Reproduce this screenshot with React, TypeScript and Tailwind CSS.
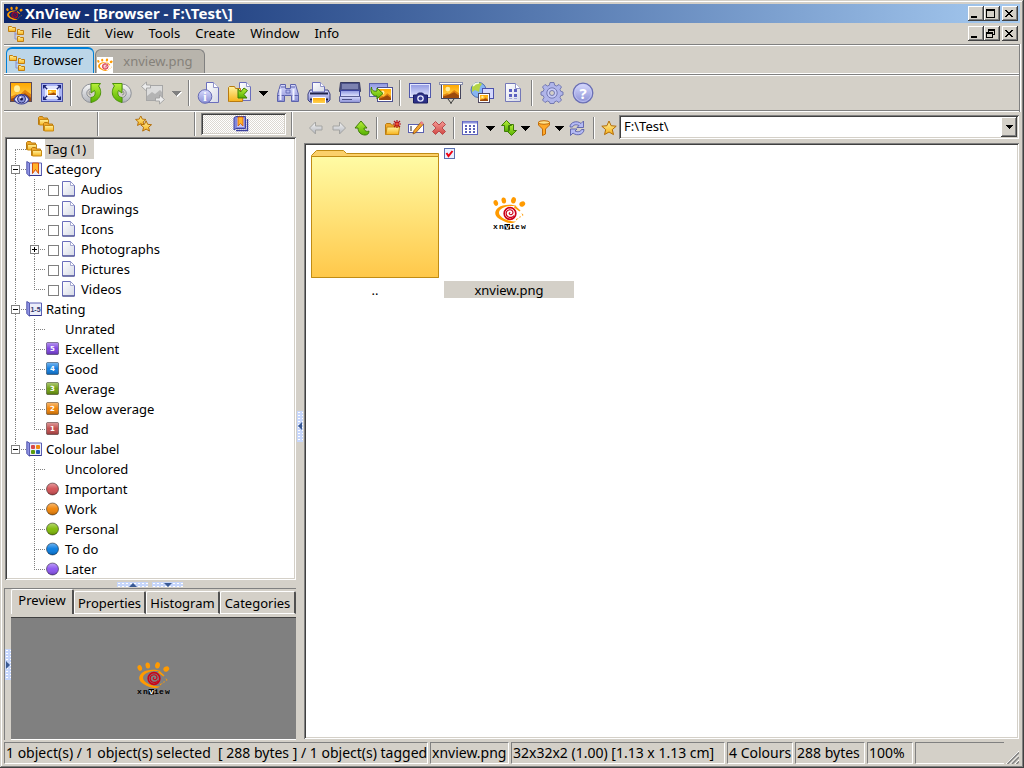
import { useState, type ReactNode } from 'react';
import clsx from 'clsx';

const SUNKEN = 'shadow-[inset_1px_1px_#808080,inset_-1px_-1px_#ffffff,inset_2px_2px_#404040,inset_-2px_-2px_#d4d0c8]';
const RAISED = 'bg-[#d4d0c8] shadow-[inset_-1px_-1px_#404040,inset_1px_1px_#ffffff,inset_-2px_-2px_#808080]';

function Gradients() {
    return (
        <svg className="absolute h-0 w-0" aria-hidden="true">
            <defs>
                <linearGradient id="gold" x1="0" y1="0" x2="0" y2="1">
                    <stop offset="0" stopColor="#fff3a0" />
                    <stop offset="1" stopColor="#f7b21c" />
                </linearGradient>
                <linearGradient id="folderBig" x1="0" y1="0" x2="0" y2="1">
                    <stop offset="0" stopColor="#fffba4" />
                    <stop offset="1" stopColor="#ffc84a" />
                </linearGradient>
                <linearGradient id="sky" x1="0" y1="0" x2="0" y2="1">
                    <stop offset="0" stopColor="#ffa800" />
                    <stop offset="1" stopColor="#ffd65c" />
                </linearGradient>
                <linearGradient id="lilac" x1="0" y1="0" x2="0" y2="1">
                    <stop offset="0" stopColor="#8d95e0" />
                    <stop offset="1" stopColor="#e3e7ff" />
                </linearGradient>
                <linearGradient id="orb" x1="0" y1="0" x2="0" y2="1">
                    <stop offset="0" stopColor="#d9dcff" />
                    <stop offset="1" stopColor="#8a8fd4" />
                </linearGradient>
                <linearGradient id="green" x1="0" y1="0" x2="0" y2="1">
                    <stop offset="0" stopColor="#b8f03a" />
                    <stop offset="1" stopColor="#55b000" />
                </linearGradient>
                <linearGradient id="paper" x1="0" y1="0" x2="1" y2="1">
                    <stop offset="0" stopColor="#ffffff" />
                    <stop offset="1" stopColor="#d5d9e6" />
                </linearGradient>
                <linearGradient id="silver" x1="0" y1="0" x2="0" y2="1">
                    <stop offset="0" stopColor="#f8f8f8" />
                    <stop offset="1" stopColor="#b0b3ba" />
                </linearGradient>
                <linearGradient id="red" x1="0" y1="0" x2="0" y2="1">
                    <stop offset="0" stopColor="#f59a94" />
                    <stop offset="1" stopColor="#d04844" />
                </linearGradient>
                <linearGradient id="shine" x1="0" y1="0" x2="0" y2="1">
                    <stop offset="0" stopColor="#ffffff" stopOpacity="0.45" />
                    <stop offset="0.5" stopColor="#ffffff" stopOpacity="0.05" />
                    <stop offset="1" stopColor="#000000" stopOpacity="0.25" />
                </linearGradient>
            </defs>
        </svg>
    );
}

function Icon({ size = 24, box = 24, children }: { size?: number; box?: number; children: ReactNode }) {
    return (
        <svg width={size} height={size} viewBox={`0 0 ${box} ${box}`} className="shrink-0" aria-hidden="true">
            {children}
        </svg>
    );
}

/* ---- shared drawings ---- */

const Landscape = ({ x, y, w, h }: { x: number; y: number; w: number; h: number }) => (
    <svg x={x} y={y} width={w} height={h} viewBox="0 0 20 16" preserveAspectRatio="none">
        <rect width="20" height="16" fill="url(#sky)" />
        <circle cx="6" cy="5" r="3" fill="#ffefa0" />
        <path d="M0 12l5-2 3 1 6-5 6 4v6H0z" fill="#e08410" />
        <path d="M0 14l7-2 7-3 6 4v3H0z" fill="#9c4a0c" />
    </svg>
);

const wordmark = [
    { char: 'x', x: 0 },
    { char: 'n', x: 6 },
    { char: 'v', x: 12 },
    { char: 'i', x: 17 },
    { char: 'e', x: 22 },
    { char: 'w', x: 28 }
];

function XnLogo({ size = 33, label = true }: { size?: number; label?: boolean }) {
    return (
        <svg width={size} height={size} viewBox={label ? '0 0 33 33' : '0 0 33 27'} className="shrink-0" role="img" aria-label="XnView">
            <g fill="#ff9a00">
                <ellipse cx="2.800" cy="6" rx="2.200" ry="2.900" transform="rotate(-20 2.800 6)" />
                <ellipse cx="10.800" cy="3.500" rx="2.300" ry="3" transform="rotate(-8 10.800 3.500)" />
                <ellipse cx="20.500" cy="3.300" rx="2.400" ry="3.200" transform="rotate(14 20.500 3.300)" />
                <ellipse cx="29.300" cy="7" rx="3" ry="2.500" transform="rotate(-30 29.300 7)" />
                <path d="M25 9.500C18 6.500 9 8 5.500 10.500c-5 4-4 8.500 1 11.500 4 2.500 8 4 11 4 2 0 4-.5 5.500-1.500-8 0-16.500-4-17-8.500 0-4 5-6.500 11-7 3-.3 6 0 8 .5z" />
                <path d="M22 8.500l5.500 5-1 1-5.500-4zM28.500 16l2 2-1 1zM26 20l2-1-1 2zM23 22l3-1-3 2.500z" />
            </g>
            <circle cx="17" cy="16.500" r="5.800" fill="none" stroke="#cc0018" strokeWidth="1.700" />
            <path d="M21 18.500c-1 2-4 2.500-6 1.200-2.500-1.500-2.500-5 0-6.400 2-1.200 5-.3 5 2.200 0 2-2.500 3-3.500 1.500-.5-.8 0-1.500.8-1.500" fill="none" stroke="#cc0018" strokeWidth="1.200" />
            {label && (
                <g fontSize="8" fontWeight="bold" fontFamily="'Liberation Mono', monospace">
                    <rect x="11.500" y="27" width="5.500" height="5.500" />
                    {wordmark.map(({ char, x }) => (
                        <text key={char} x={x} y="32" fill={char === 'v' ? '#ffffff' : '#000000'}>{char}</text>
                    ))}
                </g>
            )}
        </svg>
    );
}

const FolderShape = ({ x, y }: { x: number; y: number }) => (
    <g transform={`translate(${x} ${y})`}>
        <path d="M.5 8.500v-7l1-1h3l1 1.500h4v6.500z" fill="#f2a92a" stroke="#b87a10" />
        <path d="M1.500 3.500h9v5.500h-9z" fill="url(#gold)" stroke="#c98a14" />
    </g>
);

const FoldersIcon = () => (
    <Icon size={16} box={16}>
        <FolderShape x={0} y={0} />
        <FolderShape x={5} y={6} />
    </Icon>
);

const TreeFoldersIcon = ({ size = 16 }: { size?: number }) => (
    <Icon size={size} box={16}>
        <path d="M4 5h3v8h3M7 8h3" fill="none" stroke="#8a90d0" />
        <path d="M.5.5h3l1 1h3v4h-7z" fill="url(#gold)" stroke="#c07d10" />
        <path d="M9.500 3.500h2l1 1h3v4h-6z" fill="url(#gold)" stroke="#c07d10" />
        <path d="M9.500 10.500h2l1 1h3v4h-6z" fill="url(#gold)" stroke="#c07d10" />
    </Icon>
);

const STAR = 'M8 1l2.100 4.700 5.100.5-3.900 3.400 1.200 5L8 12l-4.500 2.600 1.200-5L.800 6.200l5.100-.5z';

const StarsIcon = () => (
    <Icon size={17} box={17}>
        <path d={STAR} transform="translate(0 -1) scale(.72)" fill="url(#gold)" stroke="#b26c08" strokeWidth="1.300" />
        <path d={STAR} transform="translate(5 4) scale(.76)" fill="url(#gold)" stroke="#b26c08" strokeWidth="1.300" />
    </Icon>
);

const TabBookIcon = () => (
    <Icon size={16} box={16}>
        <path d="M1 2l2-1.500h9.500v12H3L1 14z" fill="#8288dc" stroke="#3c41a0" />
        <path d="M3 14.500h11.500V3" fill="none" stroke="#3c41a0" strokeWidth="1.400" />
        <path d="M4 2h7v9H4z" fill="#c4c8f4" />
        <path d="M5 1h5v9L7.500 7.500 5 10z" fill="#ffb42a" stroke="#d0560a" strokeWidth=".8" />
    </Icon>
);

const Book = ({ children }: { children: ReactNode }) => (
    <Icon size={16} box={16}>
        <path d="M3.500 2L.800.500v12l2.700 2.800z" fill="#8f94e4" stroke="#4448a4" strokeWidth=".9" />
        <path d="M3.500 2h12v12.500h-12z" fill="#eceefa" stroke="#5a5eb4" />
        <path d="M3.500 14.500h12" stroke="#32368c" />
        {children}
    </Icon>
);

const PageIcon = () => (
    <svg width="14" height="16" viewBox="0 0 14 16" className="shrink-0" aria-hidden="true">
        <path d="M.5.5h8l4 4v10.500H.5z" fill="url(#paper)" stroke="#6a6ebc" />
        <path d="M8.500.5v4h4z" fill="#fff" stroke="#9094c8" strokeWidth=".8" />
        <path d="M.5 15h12" stroke="#3c4080" />
    </svg>
);

function RatingIcon({ value, color }: { value: string; color: string }) {
    return (
        <svg width="14" height="14" viewBox="0 0 14 14" className="shrink-0" aria-hidden="true">
            <rect x=".5" y=".5" width="12" height="12" rx="1" fill={color} />
            <rect x=".5" y=".5" width="12" height="12" rx="1" fill="url(#shine)" stroke="#000" strokeOpacity=".35" />
            <text x="6.500" y="9" fontSize="7" fontWeight="bold" textAnchor="middle" fill="#fff" fontFamily="'DejaVu Sans', sans-serif">{value}</text>
        </svg>
    );
}

function DotIcon({ color }: { color: string }) {
    return (
        <svg width="14" height="14" viewBox="0 0 14 14" className="shrink-0" aria-hidden="true">
            <circle cx="6.500" cy="7" r="6" fill={color} />
            <circle cx="6.500" cy="7" r="6" fill="url(#shine)" stroke="#000" strokeOpacity=".45" />
        </svg>
    );
}

/* ---- main toolbar icons ---- */

const BrowseIcon = () => (
    <Icon>
        <rect x="1.500" y="1.500" width="21" height="19" fill="#ffb010" stroke="#5c4a58" />
        <Landscape x={2} y={2} w={20} h={18} />
        <path d="M5 18.500c2-4 5-5 7.500-5s5.500 1 7.500 5c-2 3.500-5 4.500-7.500 4.500S7 22 5 18.500z" fill="#d8dcfa" stroke="#3a3f98" strokeWidth="1.200" />
        <circle cx="12.500" cy="18" r="4" fill="#8c94dc" stroke="#30347c" />
        <circle cx="12.500" cy="18" r="1.500" fill="#101448" />
        <circle cx="11.500" cy="16.500" r="1" fill="#fff" />
    </Icon>
);

const FullscreenIcon = () => (
    <Icon>
        <rect x="1.500" y="2.500" width="21" height="18" fill="#aab4f4" stroke="#4a52a8" />
        <rect x="5" y="5" width="14" height="13" fill="#e4e8ff" />
        <path d="M3 4h4L3 8zM21 4h-4l4 4zM3 19h4l-4-4zM21 19h-4l4-4z" fill="#1c2474" />
        <path d="M4 5l4 4M20 5l-4 4M4 18l4-4M20 18l-4-4" stroke="#1c2474" strokeWidth="1.200" />
        <rect x="7" y="8" width="10" height="7" fill="#fff" />
        <Landscape x={8} y={9} w={8} h={5} />
    </Icon>
);

const RotateIcon = ({ right = false }: { right?: boolean }) => (
    <Icon>
        <g transform={right ? 'matrix(-1 0 0 1 24 0)' : undefined}>
            <path d="M12 3a9 9 0 0 0 0 18.500V16.500a4.200 4.200 0 0 1 0-8.500z" fill="url(#silver)" stroke="#8e9198" />
            <path d="M12 2.500h9.500l-2 2.500c4 5 3 14-7.500 16.500v-5c4-.5 5-4 3.500-7L12 12z" fill="url(#green)" stroke="#4c9408" />
            <path d="M12 10a2 2 0 0 0 0 4" fill="none" stroke="#8e9198" />
        </g>
    </Icon>
);

/* shown greyed out: nothing to transform */
const ConvertOffIcon = () => (
    <Icon>
        <rect x="5.500" y="4.500" width="16" height="15" fill="#dcdcdc" stroke="#a6a6a6" />
        <path d="M6 15l5-4 3 2 5-4 2 2v8H6z" fill="#b4b4b4" />
        <path d="M.5 5.500l5-4.500v3h4v3h-4v3zM23.500 18.500l-5 4.500v-3h-4v-3h4v-3z" fill="#ececec" stroke="#a0a0a0" strokeWidth=".9" />
    </Icon>
);

const InfoIcon = () => (
    <Icon>
        <path d="M9.500 1.500h7l5 5v15h-12z" fill="url(#paper)" stroke="#6a6ebc" />
        <path d="M16.500 1.500v5h5" fill="#fff" stroke="#9094c8" />
        <circle cx="8" cy="15.500" r="6.800" fill="url(#orb)" stroke="#666bb4" />
        <text x="8" y="20" fontSize="12" fontWeight="bold" textAnchor="middle" fill="#fff" fontFamily="'Liberation Serif', serif">i</text>
    </Icon>
);

const OpenIcon = () => (
    <Icon>
        <path d="M11.500 1.500h7l4 4v14h-11z" fill="url(#paper)" stroke="#6a6ebc" />
        <path d="M18.500 1.500v4h4" fill="#fff" stroke="#9094c8" />
        <path d="M.5 20.500v-14l1-1h5l1 2h5v3h3l-1 10h-13z" fill="url(#gold)" stroke="#b87a10" />
        <path d="M19.500 9.500l-3.500 4 3 3.500h-9V8l2.500 3L16 7z" fill="url(#green)" stroke="#3c7c04" />
    </Icon>
);

const SearchIcon = () => (
    <Icon>
        <path d="M4.500 3.500h5v4h5v-4h5l3 10v7h-7v-6h-7v6h-7v-7z" fill="url(#orb)" stroke="#5c62ac" />
        <path d="M2 14.500h6M16 14.500h6M5 6h4M15 6h4" stroke="#5c62ac" />
        <path d="M4.500 8v11M17.500 8v11" stroke="#f0f2ff" strokeWidth="2" />
        <path d="M10 9h4v3h-4z" fill="#b4b8ee" stroke="#5c62ac" strokeWidth=".8" />
    </Icon>
);

const PrintIcon = () => (
    <Icon>
        <path d="M3 9h18l2 4v6l-2 2H3l-2-2v-6z" fill="url(#orb)" stroke="#3c4080" />
        <path d="M5.500 11V1.500h8l4 4V11z" fill="url(#paper)" stroke="#6a6ebc" />
        <path d="M13.500 1.500v4h4" fill="#fff" stroke="#9094c8" />
        <path d="M3 11.500h18v2H3z" fill="#20244c" />
        <path d="M3 17.500h18v2H3z" fill="#181c40" />
        <path d="M5.500 16.500h13v6h-13z" fill="url(#sky)" stroke="#fff" />
    </Icon>
);

const ScanIcon = () => (
    <Icon>
        <path d="M2.500 1.500h19l1 9h-21z" fill="#4c5288" stroke="#363a60" />
        <path d="M4 3h16v5H4z" fill="#7c82b0" />
        <path d="M2.500 9.500h19v6h-19z" fill="url(#lilac)" stroke="#3c44a0" />
        <path d="M1.500 15.500h21v5l-1 1h-19l-1-1z" fill="url(#orb)" stroke="#5c6094" />
        <path d="M4 18.500h10" stroke="#4c5288" />
    </Icon>
);

const BatchIcon = () => (
    <Icon>
        <rect x=".5" y="2.500" width="18" height="13" fill="url(#lilac)" stroke="#5c62ac" />
        <rect x="8.500" y="6.500" width="15" height="14" fill="#fff" stroke="#4c5090" />
        <Landscape x={10} y={8} w={12} h={11} />
        <path d="M2.500 6c0 4 3 4.500 5.500 4V7l6 5.500-6 5.500v-3C4 15.500.5 11 2.500 6z" fill="url(#green)" stroke="#3c7c04" />
    </Icon>
);

const CaptureIcon = () => (
    <Icon>
        <rect x="1.500" y="2.500" width="21" height="14" fill="url(#lilac)" stroke="#5058ac" />
        <rect x="2.500" y="3.500" width="19" height="12" fill="none" stroke="#e4e7ff" />
        <path d="M5.500 14h3l2-2h4l2 2h3v8h-14z" fill="#2c3088" stroke="#181c60" />
        <circle cx="12.500" cy="17.500" r="3.300" fill="#e8ebff" />
        <circle cx="12.500" cy="17.500" r="2" fill="#3c4298" />
    </Icon>
);

const SlideshowIcon = () => (
    <Icon>
        <path d="M9 18l3 4 3-4M12 22v1" fill="none" stroke="#333" />
        <rect x="2.500" y="3.500" width="19" height="14" fill="#fff" stroke="#44445c" />
        <Landscape x={4} y={4} w={16} h={13} />
        <rect x=".5" y="1.500" width="23" height="2" fill="#fff" stroke="#8a8eac" />
    </Icon>
);

const WebIcon = () => (
    <Icon>
        <circle cx="8.500" cy="9" r="7.500" fill="#86b4f2" stroke="#4c6cb0" />
        <path d="M2 6c3-5 8-5 10-3l-2 3-1 5-4-2-3 2zM8 12l5 1-2 3-3-1z" fill="#b4d444" />
        <path d="M3 5c2-3 4-3 6-3" stroke="#f4fbe0" strokeWidth="1.500" fill="none" />
        <rect x="12.500" y="7.500" width="11" height="10" fill="#d4d8fc" stroke="#4c52ac" />
        <rect x="8.500" y="12.500" width="11" height="9" fill="#fff" stroke="#504860" />
        <Landscape x={10} y={14} w={8} h={6} />
    </Icon>
);

const ContactIcon = () => (
    <Icon>
        <path d="M4.500 2.500h10l5 5v13h-15z" fill="url(#paper)" stroke="#7478b8" />
        <path d="M14.500 2.500v5h5" fill="#fff" stroke="#9094c8" />
        <path d="M8 8h3v3H8zM13 8h3v3h-3zM8 13h3v3H8zM13 13h3v3h-3z" fill="#5a60c0" />
        <path d="M8 17.500h3M13 17.500h3" stroke="#a4a8dc" />
    </Icon>
);

const OptionsIcon = () => (
    <Icon>
        <g transform="translate(0 -1)" fill="#b0b5ea" stroke="#6c72ac" strokeWidth=".9">
            <path d="M10 2.500h4l.600 2.700 2 .8L19 4.500l2.500 2.500-1.500 2.400.8 2 2.200.600v3l-2.200.600-.8 2 1.500 2.400L19 22.500l-2.400-1.500-2 .8L14 23.500h-4l-.600-1.700-2-.8L5 22.500l-2.500-2.500L4 17.600l-.8-2L1 15v-3l2.200-.600.8-2L2.500 7 5 4.500l2.400 1.500 2-.8z" />
            <circle cx="12" cy="13" r="5.200" fill="#c6caf6" />
            <circle cx="12" cy="13" r="2.500" fill="#d4d0c8" />
        </g>
    </Icon>
);

const HelpIcon = () => (
    <Icon>
        <circle cx="12" cy="12" r="9.800" fill="url(#orb)" stroke="#6a6fb4" strokeWidth="1.300" />
        <circle cx="12" cy="12" r="8.500" fill="none" stroke="#c8ccf8" strokeWidth=".7" />
        <text x="12" y="17.500" fontSize="15" fontWeight="bold" textAnchor="middle" fill="#fff" fontFamily="'Noto Sans', sans-serif">?</text>
    </Icon>
);

/* ---- navigation icons ---- */

const ARROW = 'M1.500 8l6-6v4h6.500v4H7.500v4z';
const BackIcon = () => <Icon size={16} box={16}><path d={ARROW} fill="url(#silver)" stroke="#a4a4a2" /></Icon>;
const ForwardIcon = () => <Icon size={16} box={16}><path d={ARROW} transform="matrix(-1 0 0 1 16 0)" fill="url(#silver)" stroke="#a4a4a2" /></Icon>;

const UpIcon = () => (
    <Icon size={16} box={16}>
        <path d="M7 1L1 8h3c0 4 3 7 7 7 2 0 4-1 4-4-2 1-5 0-5-3h3z" fill="url(#green)" stroke="#3f7d06" />
    </Icon>
);

const NewFolderIcon = () => (
    <Icon size={16} box={16}>
        <path d="M.5 14.500v-10l1-1h4l1 1.500h7v9.500z" fill="#f2a92a" stroke="#b87a10" />
        <path d="M2 7h12.500l-1 7.500H1z" fill="url(#gold)" stroke="#c98a14" />
        <path d="M12 0v8M8 4h8M9 1l6 6M15 1L9 7" stroke="#b0101c" strokeWidth="1.200" />
        <circle cx="12" cy="4" r="1.500" fill="#f05030" />
    </Icon>
);

const RenameIcon = () => (
    <Icon size={16} box={16}>
        <rect x=".5" y="4.500" width="15" height="8" fill="#fff" stroke="#5a60b0" />
        <path d="M3 6v5" stroke="#222" />
        <path d="M5 14l1-3.500L13 2l2.500 2L8 12.500z" fill="#f5a428" stroke="#8c4c10" strokeWidth=".8" />
        <path d="M12 3l1.500-2 2 2L14 5z" fill="#e88090" />
    </Icon>
);

const DeleteIcon = () => (
    <Icon size={16} box={16}>
        <path d="M4.500 1.500L8 5l3.500-3.500 3 3L11 8l3.500 3.500-3 3L8 11l-3.500 3.500-3-3L5 8 1.500 4.500z" fill="url(#red)" stroke="#b84a4c" strokeLinejoin="round" />
    </Icon>
);

const ThumbsIcon = () => (
    <Icon size={16} box={16}>
        <rect x=".5" y="1.500" width="15" height="13" fill="#fff" stroke="#5c62bc" />
        <path d="M1 2.500h14" stroke="#8c92dc" strokeWidth="2" />
        <g fill="#5a60b8">
            {[3, 7, 11].map((x) => [5, 8, 11].map((y) => <rect key={`${x}-${y}`} x={x} y={y} width="2" height="2" />))}
        </g>
    </Icon>
);

const SortIcon = () => (
    <Icon size={16} box={16}>
        <path d="M10.500 15.500l-5-5h3v-6h4v6h3z" fill="url(#green)" stroke="#3f7d06" />
        <path d="M5.500.5l5 5h-3v6h-4v-6h-3z" fill="url(#green)" stroke="#3f7d06" />
    </Icon>
);

const FilterIcon = () => (
    <Icon size={16} box={16}>
        <path d="M2.500 2v3l4 4v6.500l3-1.500V9l4-4V2z" fill="#ffa928" stroke="#c06a08" />
        <ellipse cx="8" cy="2.500" rx="5.500" ry="1.800" fill="#ffe28a" stroke="#c06a08" />
    </Icon>
);

const RefreshIcon = () => (
    <Icon size={16} box={16}>
        <path d="M1 7c0-5 7-7 11-3.500L14.500 1v6.500H8L10 5.500C7 4 4 5 3.500 7z" fill="#b4baf4" stroke="#5a60a8" strokeWidth=".9" />
        <path d="M15 9.500c0 5-7 7-11 3.500L1.500 15.500V9H8l-2 2c3 1.500 6 .5 6.500-1.500z" fill="#b4baf4" stroke="#5a60a8" strokeWidth=".9" />
    </Icon>
);

const FavoriteIcon = () => <Icon size={16} box={16}><path d={STAR} fill="url(#gold)" stroke="#b26c08" /></Icon>;

/* ---- small controls ---- */

const Caret = ({ className = 'text-black' }: { className?: string }) => (
    <svg width="9" height="5" viewBox="0 0 9 5" className={clsx('shrink-0', className)} aria-hidden="true" shapeRendering="crispEdges">
        <path d="M0 0h9v1H8v1H7v1H6v1H5v1H4V4H3V3H2V2H1V1H0z" fill="currentColor" />
    </svg>
);

function Separator({ className }: { className: string }) {
    return (
        <span className={clsx('flex shrink-0 justify-center', className)}>
            <span className="w-0.5 border-l border-r border-l-[#808080] border-r-white" />
        </span>
    );
}

function IconButton({ label, className, children }: { label: string; className?: string; children: ReactNode }) {
    return (
        <button type="button" aria-label={label} title={label} className={clsx('flex shrink-0 items-center justify-center', className)}>
            {children}
        </button>
    );
}

const GLYPHS = {
    minimize: 'M1 7h6v2H1z',
    maximize: 'M0 0h9v9H0zM1 2v6h7V2z',
    restore: 'M2 0h7v6H7v3H0V3h2zM3 2v1h4v2h1V2zM1 5v3h5V5z',
    close: 'M0 1h2v1h1v1h2V2h1V1h2v1H7v1H6v1H5v1h1v1h1v1h1v1H6V7H5V6H3v1H2v1H0V7h1V6h1V5h1V4H2V3H1V2H0z'
};

function CaptionButton({ glyph, className }: { glyph: keyof typeof GLYPHS; className?: string }) {
    return (
        <button type="button" aria-label={glyph} className={clsx('flex h-[15px] w-4 items-start pt-[3px]', glyph === 'close' ? 'pl-[3px]' : 'pl-0.5', RAISED, className)}>
            <svg width="9" height="9" viewBox="0 0 9 9" fillRule="evenodd" shapeRendering="crispEdges" aria-hidden="true">
                <path d={GLYPHS[glyph]} />
            </svg>
        </button>
    );
}

function CaptionButtons({ middle }: { middle: 'maximize' | 'restore' }) {
    return (
        <div className="ml-auto flex pr-0.5">
            <CaptionButton glyph="minimize" />
            <CaptionButton glyph={middle} />
            <CaptionButton glyph="close" className="ml-0.5" />
        </div>
    );
}

const GRIP = 'bg-[#c6d6fb] bg-[radial-gradient(circle,#ffffff_1px,transparent_1px)] bg-[size:4px_3px]';

function Grip({ dir }: { dir: 'up' | 'down' | 'left' | 'right' }) {
    const d = { up: 'M0 4L4 0l4 4z', down: 'M0 0h8L4 4z', left: 'M4 0v8L0 4z', right: 'M0 0l4 4-4 4z' }[dir];
    const vertical = dir === 'left' || dir === 'right';
    return (
        <span className={clsx('flex shrink-0 items-center justify-center', GRIP, vertical ? 'h-[31px] w-1.5' : 'h-[5px] w-[31px]')}>
            <svg width={vertical ? 4 : 8} height={vertical ? 8 : 4} aria-hidden="true">
                <path d={d} fill="#3a5a94" />
            </svg>
        </span>
    );
}

/* ---- toolbars ---- */

type Tool = { label: string; icon?: ReactNode; kind?: 'sep' | 'caret' | 'caretOff' };

const mainTools: Tool[] = [
    { label: 'Browse', icon: <BrowseIcon /> },
    { label: 'Full screen', icon: <FullscreenIcon /> },
    { label: 's1', kind: 'sep' },
    { label: 'Rotate left', icon: <RotateIcon /> },
    { label: 'Rotate right', icon: <RotateIcon right /> },
    { label: 'Lossless transformations', icon: <ConvertOffIcon /> },
    { label: 'Transformation list', kind: 'caretOff' },
    { label: 's2', kind: 'sep' },
    { label: 'File information', icon: <InfoIcon /> },
    { label: 'Open', icon: <OpenIcon /> },
    { label: 'Open list', kind: 'caret' },
    { label: 'Search', icon: <SearchIcon /> },
    { label: 'Print', icon: <PrintIcon /> },
    { label: 'Scan', icon: <ScanIcon /> },
    { label: 'Batch processing', icon: <BatchIcon /> },
    { label: 's3', kind: 'sep' },
    { label: 'Capture', icon: <CaptureIcon /> },
    { label: 'Slide show', icon: <SlideshowIcon /> },
    { label: 'Web page', icon: <WebIcon /> },
    { label: 'Contact sheet', icon: <ContactIcon /> },
    { label: 's4', kind: 'sep' },
    { label: 'Options', icon: <OptionsIcon /> },
    { label: 'Help', icon: <HelpIcon /> }
];

function MainToolbar() {
    return (
        <div className="flex h-9 items-stretch border-t border-b border-t-white border-b-[#808080] py-1 pl-px shadow-[0_1px_#ffffff]">
            {mainTools.map((tool) => {
                if (tool.kind === 'sep') return <Separator key={tool.label} className="w-2" />;
                if (tool.kind) {
                    return (
                        <IconButton key={tool.label} label={tool.label} className="w-[17px]">
                            <Caret className={tool.kind === 'caret' ? 'text-black' : 'text-[#808080] drop-shadow-[1px_1px_0_#ffffff]'} />
                        </IconButton>
                    );
                }
                return <IconButton key={tool.label} label={tool.label} className="w-[31px]">{tool.icon}</IconButton>;
            })}
        </div>
    );
}

function NavToolbar() {
    const [path, setPath] = useState('F:\\Test\\');

    return (
        <div className="flex h-[31px] shrink-0 items-stretch pt-[3px] pb-1">
            <div className="flex items-stretch pt-0.5">
                <IconButton label="Back" className="w-[23px]"><BackIcon /></IconButton>
                <IconButton label="Forward" className="w-[23px]"><ForwardIcon /></IconButton>
                <IconButton label="Up" className="w-[23px]"><UpIcon /></IconButton>
                <Separator className="w-2" />
                <IconButton label="New folder" className="w-[23px]"><NewFolderIcon /></IconButton>
                <IconButton label="Rename" className="w-[23px]"><RenameIcon /></IconButton>
                <IconButton label="Delete" className="w-[23px]"><DeleteIcon /></IconButton>
                <Separator className="w-2" />
                <IconButton label="View" className="w-6"><ThumbsIcon /></IconButton>
                <IconButton label="View list" className="w-4"><Caret /></IconButton>
                <IconButton label="Sort" className="w-[22px]"><SortIcon /></IconButton>
                <IconButton label="Sort list" className="w-[10px]"><Caret /></IconButton>
                <IconButton label="Filter" className="w-6 pl-1"><FilterIcon /></IconButton>
                <IconButton label="Filter list" className="w-[10px]"><Caret /></IconButton>
                <IconButton label="Refresh" className="w-[26px]"><RefreshIcon /></IconButton>
                <Separator className="w-2" />
                <IconButton label="Favourites" className="w-[21px]"><FavoriteIcon /></IconButton>
            </div>
            <div className={clsx('flex flex-1 bg-white p-0.5', SUNKEN)}>
                <input
                    aria-label="Path"
                    value={path}
                    onChange={(e) => setPath(e.target.value)}
                    className="min-w-0 flex-1 px-[3px] pb-0.5 outline-none"
                />
                <button type="button" aria-label="Path history" className={clsx('flex w-4 items-center justify-center', RAISED)}>
                    <svg width="7" height="4" shapeRendering="crispEdges" aria-hidden="true"><path d="M0 0h7v1H6v1H5v1H4v1H3V3H2V2H1V1H0z" /></svg>
                </button>
            </div>
        </div>
    );
}

/* ---- categories tree ---- */

type Leaf = { label: string; icon?: ReactNode; check?: boolean; expandable?: boolean };
type Branch = { label: string; icon: ReactNode; selected?: boolean; items: Leaf[] };

const pages = ['Audios', 'Drawings', 'Icons', 'Photographs', 'Pictures', 'Videos'];

const tree: Branch[] = [
    { label: 'Tag (1)', icon: <FoldersIcon />, selected: true, items: [] },
    {
        label: 'Category',
        icon: <Book><path d="M6.500 2h6v10.500l-3-4-3 4z" fill="#ffb42a" stroke="#d8500c" /></Book>,
        items: pages.map((label) => ({ label, icon: <PageIcon />, check: true, expandable: label === 'Photographs' }))
    },
    {
        label: 'Rating',
        icon: <Book><text x="9.500" y="11" fontSize="7" fontWeight="bold" textAnchor="middle" fill="#34386c" fontFamily="'Liberation Sans', sans-serif">1-5</text></Book>,
        items: [
            { label: 'Unrated' },
            { label: 'Excellent', icon: <RatingIcon value="5" color="#7a3fe0" /> },
            { label: 'Good', icon: <RatingIcon value="4" color="#0a7ae0" /> },
            { label: 'Average', icon: <RatingIcon value="3" color="#6c9c0a" /> },
            { label: 'Below average', icon: <RatingIcon value="2" color="#f08000" /> },
            { label: 'Bad', icon: <RatingIcon value="1" color="#c04848" /> }
        ]
    },
    {
        label: 'Colour label',
        icon: (
            <Book>
                <rect x="5" y="4" width="4" height="4" rx="1" fill="#d8484c" />
                <rect x="10" y="4" width="4" height="4" rx="1" fill="#f08a10" />
                <rect x="5" y="9" width="4" height="4" rx="1" fill="#5c9c10" />
                <rect x="10" y="9" width="4" height="4" rx="1" fill="#2458b8" />
            </Book>
        ),
        items: [
            { label: 'Uncolored' },
            { label: 'Important', icon: <DotIcon color="#d04c50" /> },
            { label: 'Work', icon: <DotIcon color="#f08000" /> },
            { label: 'Personal', icon: <DotIcon color="#7cb800" /> },
            { label: 'To do', icon: <DotIcon color="#0078e0" /> },
            { label: 'Later', icon: <DotIcon color="#8850f0" /> }
        ]
    }
];

function Connector({ up = true, down = true, box }: { up?: boolean; down?: boolean; box?: 'plus' | 'minus' }) {
    return (
        <span className="relative ml-2 flex h-5 w-[11px] shrink-0 flex-col">
            <span className={clsx('h-[11px] border-b border-dotted border-[#808080]', up && 'border-l')} />
            <span className={clsx('flex-1 border-dotted border-[#808080]', down && 'border-l')} />
            {box && (
                <button
                    type="button"
                    aria-label={box === 'plus' ? 'Expand' : 'Collapse'}
                    className="absolute top-1.5 -left-1 flex h-[9px] w-[9px] items-center justify-center border border-[#808080] bg-white"
                >
                    <svg width="5" height="5" shapeRendering="crispEdges" aria-hidden="true">
                        <path d={box === 'plus' ? 'M0 2h5v1H0zM2 0h1v5H2z' : 'M0 2h5v1H0z'} />
                    </svg>
                </button>
            )}
        </span>
    );
}

function LeafRow({ leaf, last, rail }: { leaf: Leaf; last: boolean; rail: boolean }) {
    return (
        <li className="flex h-5 items-center">
            <span className={clsx('ml-2 h-5 w-[11px] border-dotted border-[#808080]', rail && 'border-l')} />
            <Connector down={!last} box={leaf.expandable ? 'plus' : undefined} />
            {leaf.check ? (
                <label className="flex items-center">
                    <input type="checkbox" className="mt-0.5 mr-[3px] ml-[3px] h-[11px] w-[11px] appearance-none border border-[#808080] bg-white" />
                    {leaf.icon}
                    <span className="ml-[5px]">{leaf.label}</span>
                </label>
            ) : (
                <>
                    <span className="ml-px flex w-[14px] shrink-0">{leaf.icon}</span>
                    <span className="ml-[5px]">{leaf.label}</span>
                </>
            )}
        </li>
    );
}

function CategoryTree() {
    return (
        <ul className={clsx('min-h-0 flex-1 overflow-hidden bg-white p-0.5', SUNKEN)}>
            {tree.map((branch, i) => {
                const lastBranch = i === tree.length - 1;
                return (
                    <li key={branch.label}>
                        <div className="flex h-5 items-center">
                            <Connector up={i > 0} down={!lastBranch} box={branch.items.length ? 'minus' : undefined} />
                            {branch.icon}
                            <span className={clsx('ml-[3px] h-5 px-px leading-5', branch.selected && 'bg-[#d4d0c8] pr-2')}>{branch.label}</span>
                        </div>
                        <ul>
                            {branch.items.map((leaf, n) => (
                                <LeafRow key={leaf.label} leaf={leaf} last={n === branch.items.length - 1} rail={!lastBranch} />
                            ))}
                        </ul>
                    </li>
                );
            })}
        </ul>
    );
}

function SideTabs() {
    return (
        <div className="flex h-6 shrink-0">
            <button type="button" aria-label="Folders" className="flex w-[93px] items-center justify-center pr-2.5"><FoldersIcon /></button>
            <Separator className="w-0.5" />
            <button type="button" aria-label="Favourites" className="flex w-[95px] items-center justify-center pr-1.5"><StarsIcon /></button>
            <Separator className="w-0.5" />
            <span className="flex flex-1 px-[5px] py-px">
                <button
                    type="button"
                    aria-label="Categories"
                    className={clsx('flex flex-1 items-center justify-center bg-[repeating-conic-gradient(#ffffff_0_25%,#dcd8d2_0_50%)] bg-[size:2px_2px] pr-1.5', SUNKEN)}
                >
                    <TabBookIcon />
                </button>
            </span>
            <Separator className="mr-[3px] w-0.5" />
        </div>
    );
}

const infoTabs = [
    { label: 'Preview', width: 'w-[63px]' },
    { label: 'Properties', width: 'w-[72px]' },
    { label: 'Histogram', width: 'w-[74px]' },
    { label: 'Categories', width: 'flex-1' }
];

function InfoPanel() {
    return (
        <div className="flex h-[152px] shrink-0 border-t border-l border-[#808080]">
            <div className="flex w-1.5 items-center"><Grip dir="right" /></div>
            <div className="flex min-w-0 flex-1 flex-col border-b border-white">
                <div role="tablist" className="flex h-[25px] shrink-0 items-end">
                    {infoTabs.map((tab, i) => (
                        <button
                            key={tab.label}
                            type="button"
                            role="tab"
                            aria-selected={i === 0}
                            className={clsx(
                                'rounded-t-xs border-t border-r-2 border-l border-t-white border-r-[#505050] border-l-white text-center whitespace-nowrap',
                                i === 0 ? 'h-[25px] pb-1' : 'h-[23px] border-b border-b-white',
                                tab.width
                            )}
                        >
                            {tab.label}
                        </button>
                    ))}
                </div>
                <div className="h-1 shrink-0 border-b border-b-[#404040]" />
                <div className="flex flex-1 items-center justify-center bg-[#808080]">
                    <XnLogo />
                </div>
            </div>
        </div>
    );
}

/* ---- file list ---- */

const BigFolder = () => (
    <svg width="128" height="128" viewBox="0 0 128 128" aria-hidden="true">
        <path d="M.5 127.500V5.500l5-5h27l3 3h92v124z" fill="#fbd06a" stroke="#c08c14" />
        <path d="M.5 6.500h127v121H.5z" fill="url(#folderBig)" stroke="#c08c14" />
    </svg>
);

function FileList() {
    const [tagged, setTagged] = useState(true);

    return (
        <div className={clsx('mb-px flex flex-1 content-start items-start gap-1 bg-white px-1.5 py-[5px]', SUNKEN)}>
            <div className="w-[130px]">
                <div className="flex h-[131px] items-end justify-center pb-px"><BigFolder /></div>
                <p className="mt-0.5 h-[17px] text-center leading-[18px]">..</p>
            </div>
            <div className="w-[130px]">
                <div className="relative flex h-[131px] items-center justify-center">
                    <label className="absolute top-0 left-0 flex h-[11px] w-[11px]">
                        <input
                            type="checkbox"
                            aria-label="Tag xnview.png"
                            checked={tagged}
                            onChange={(e) => setTagged(e.target.checked)}
                            className="h-[11px] w-[11px] appearance-none border border-[#5a6fae] bg-[#e8f0ff]"
                        />
                        {tagged && (
                            <svg width="11" height="11" className="pointer-events-none absolute" aria-hidden="true">
                                <path d="M2.500 5l2 3 4-5" fill="none" stroke="#f00010" strokeWidth="2" />
                            </svg>
                        )}
                    </label>
                    <XnLogo />
                </div>
                <p className="mt-0.5 h-[17px] bg-[#d4d0c8] text-center leading-[18px]">xnview.png</p>
            </div>
        </div>
    );
}

/* ---- status bar ---- */

const statusPanels = [
    { text: '1 object(s) / 1 object(s) selected  [ 288 bytes ] / 1 object(s) tagged', width: 'w-[424px]' },
    { text: 'xnview.png', width: 'w-[79px]' },
    { text: '32x32x2 (1.00) [1.13 x 1.13 cm]', width: 'w-[214px]' },
    { text: '4 Colours', width: 'w-[66px]' },
    { text: '288 bytes', width: 'w-[70px]' },
    { text: '100%', width: 'w-[46px]' }
];

function StatusBar() {
    const panel = 'border-t border-l border-t-[#808080] border-l-[#808080]';
    return (
        <footer className="mt-0.5 flex h-[22px] shrink-0 gap-0.5 text-sm">
            {statusPanels.map((p) => (
                <div key={p.text} className={clsx(panel, 'shrink-0 border-r border-b border-r-white border-b-white pl-px leading-5 whitespace-pre', p.width)}>
                    {p.text}
                </div>
            ))}
            <div className={clsx(panel, 'flex-1 border-b border-b-white')} />
            <svg width="13" height="13" className="mr-px self-end" aria-hidden="true">
                <path d="M0 13L13 0M4.500 13L13 4.500M9 13l4-4" stroke="#fff" />
                <path d="M1.500 13L13 1.500M6 13l7-7M10.500 13l2.500-2.500" stroke="#808080" strokeWidth="1.500" />
            </svg>
        </footer>
    );
}

const menus = ['File', 'Edit', 'View', 'Tools', 'Create', 'Window', 'Info'];

export default function App() {
    return (
        <div className="flex h-screen flex-col overflow-hidden bg-[#d4d0c8] p-1 font-['Noto_Sans',sans-serif] text-[13px] leading-5 text-black shadow-[inset_-1px_-1px_#404040,inset_1px_1px_#d4d0c8,inset_-2px_-2px_#808080,inset_2px_2px_#ffffff]">
            <Gradients />
            <header className="flex h-[19px] shrink-0 items-center bg-linear-to-r from-[#0a246a] to-[#a6caf0]">
                <span className="flex w-[21px] justify-center"><XnLogo size={17} label={false} /></span>
                <h1 className="text-[15px] leading-[19px] font-bold text-white">XnView - [Browser - F:\Test\]</h1>
                <CaptionButtons middle="maximize" />
            </header>

            <nav className="flex h-[21px] shrink-0 items-center pl-1">
                <TreeFoldersIcon />
                <div className="flex gap-[15px] pb-0.5 pl-[7px]">
                    {menus.map((menu) => (
                        <button key={menu} type="button">{menu}</button>
                    ))}
                </div>
                <CaptionButtons middle="restore" />
            </nav>

            <div className="flex shrink-0 flex-col border-t border-r border-[#808080] pb-px shadow-[inset_0_1px_#ffffff,1px_0_#ffffff]">
                <div role="tablist" className="flex h-[29px] items-end gap-px border-b border-white pt-0.5 pl-0.5">
                    <button type="button" role="tab" aria-selected="true" className="flex h-[26px] items-center gap-2 rounded-t-md border border-t-2 border-b-0 border-[#0080d8] bg-[#bcd6e8] pr-2.5 pl-0.5">
                        <span className="pt-1"><TreeFoldersIcon /></span>
                        <span className="pb-0.5">Browser</span>
                    </button>
                    <button type="button" role="tab" aria-selected="false" className="flex h-6 items-center gap-2.5 rounded-t-md border border-b-0 border-[#808080] bg-[#b8b4ac] pr-3 pb-0.5 pl-px text-[#85817a]">
                        <span className="mt-[9px] flex h-4 w-4 flex-col bg-white">
                            <XnLogo size={16} label={false} />
                        </span>
                        <span>xnview.png</span>
                    </button>
                </div>
                <div className="border-t border-[#808080]">
                    <MainToolbar />
                </div>
            </div>

            <div className="flex min-h-0 flex-1">
                <aside className="flex w-[292px] shrink-0 flex-col">
                    <SideTabs />
                    <div className="ml-px flex min-h-0 flex-1 pt-px">
                        <CategoryTree />
                    </div>
                    <div className="flex h-2 shrink-0 items-end justify-center gap-1 pb-px">
                        <Grip dir="up" />
                        <Grip dir="down" />
                    </div>
                    <InfoPanel />
                </aside>
                <div className="flex w-2 shrink-0 items-center justify-center"><Grip dir="left" /></div>
                <main className="mr-px flex min-w-0 flex-1 flex-col">
                    <NavToolbar />
                    <FileList />
                </main>
            </div>

            <StatusBar />
        </div>
    );
}
